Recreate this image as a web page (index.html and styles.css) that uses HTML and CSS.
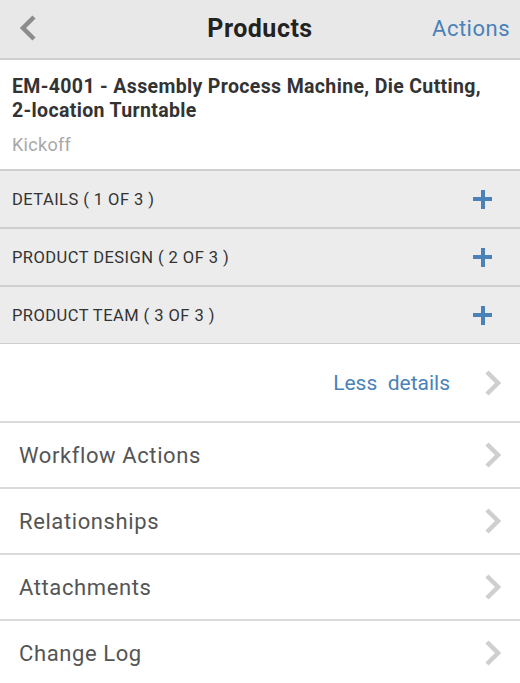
FILE: index.html
```html
<!DOCTYPE html>
<html>
<head>
<meta charset="utf-8">
<link rel="stylesheet" href="styles.css">
</head>
<body>
<div class="app">
  <header class="topbar">
    <span class="back">
      <svg width="20" height="28" viewBox="0 0 20 28"><path d="M16 3 L5 14 L16 25" fill="none" stroke="#8c8c8c" stroke-width="4.5"/></svg>
    </span>
    <h1 class="title">Products</h1>
    <span class="actions">Actions</span>
  </header>
  <section class="record">
    <div class="record-name">EM-4001 - Assembly Process Machine, Die Cutting, <span class="nowrap">2-location</span> Turntable</div>
    <div class="record-stage">Kickoff</div>
  </section>
  <div class="sections">
    <div class="section-row"><span>DETAILS ( 1 OF 3 )</span><span class="plus"></span></div>
    <div class="section-row"><span>PRODUCT DESIGN ( 2 OF 3 )</span><span class="plus"></span></div>
    <div class="section-row"><span>PRODUCT TEAM ( 3 OF 3 )</span><span class="plus"></span></div>
  </div>
  <div class="less-row">
    <span class="less">Less&nbsp; details</span>
    <svg class="chev" width="18" height="28" viewBox="0 0 18 28"><path d="M3 3 L14 14 L3 25" fill="none" stroke="#cfcfcf" stroke-width="4.5"/></svg>
  </div>
  <ul class="nav">
    <li class="nav-item"><span>Workflow Actions</span><svg class="chev" width="18" height="28" viewBox="0 0 18 28"><path d="M3 3 L14 14 L3 25" fill="none" stroke="#cfcfcf" stroke-width="4.5"/></svg></li>
    <li class="nav-item"><span>Relationships</span><svg class="chev" width="18" height="28" viewBox="0 0 18 28"><path d="M3 3 L14 14 L3 25" fill="none" stroke="#cfcfcf" stroke-width="4.5"/></svg></li>
    <li class="nav-item"><span>Attachments</span><svg class="chev" width="18" height="28" viewBox="0 0 18 28"><path d="M3 3 L14 14 L3 25" fill="none" stroke="#cfcfcf" stroke-width="4.5"/></svg></li>
    <li class="nav-item"><span>Change Log</span><svg class="chev" width="18" height="28" viewBox="0 0 18 28"><path d="M3 3 L14 14 L3 25" fill="none" stroke="#cfcfcf" stroke-width="4.5"/></svg></li>
  </ul>
</div>
</body>
</html>
```
FILE: styles.css
```css
* { box-sizing: border-box; }
html, body { margin: 0; padding: 0; background: #fff; }
body { font-family: Roboto, "Liberation Sans", sans-serif; }
.app { width: 520px; overflow: hidden; }

.topbar {
  height: 60px;
  background: #e8e8e8;
  border-bottom: 2px solid #cfcfcf;
  display: grid;
  grid-template-columns: 1fr auto 1fr;
  align-items: center;
  padding: 0 10px 2px 10px;
}
.back { display: flex; align-items: center; margin-left: 8px; }
.title {
  margin: 0;
  font-size: 25px;
  font-weight: 700;
  letter-spacing: 0.5px;
  color: #222;
}
.actions {
  justify-self: end;
  font-size: 22px;
  letter-spacing: 0.5px;
  color: #4a82b8;
}

.record { padding: 15px 12px 13px; }
.record-name {
  font-size: 19.5px;
  font-weight: 700;
  letter-spacing: 0.35px;
  color: #333;
  line-height: 24px;
}
.nowrap { white-space: nowrap; }
.record-stage {
  margin-top: 11px;
  font-size: 18px;
  letter-spacing: 0.3px;
  color: #a8a8a8;
  line-height: 22px;
}

.sections { border-top: 2px solid #cfcfcf; }
.section-row {
  height: 58px;
  background: #ececec;
  border-bottom: 2px solid #cfcfcf;
  display: flex;
  align-items: center;
  justify-content: space-between;
  padding: 0 28px 0 12px;
  font-size: 16.5px;
  letter-spacing: 0.45px;
  color: #333;
}
.section-row:last-child { height: 57px; border-bottom-width: 1px; }
.plus {
  position: relative;
  width: 19px;
  height: 19px;
}
.plus::before, .plus::after {
  content: "";
  position: absolute;
  background: #4a82b8;
}
.plus::before { left: 0; right: 0; top: 7.5px; height: 4px; }
.plus::after { top: 0; bottom: 0; left: 7.5px; width: 4px; }

.less-row {
  height: 79px;
  display: flex;
  align-items: center;
  justify-content: flex-end;
  padding: 0 18px 0 19px;
  border-bottom: 2px solid #dadada;
}
.less {
  font-size: 21px;
  color: #4a82b8;
  margin-right: 34px;
}
.chev { display: block; }

.nav { list-style: none; margin: 0; padding: 0; }
.nav-item {
  height: 66px;
  display: flex;
  align-items: center;
  justify-content: space-between;
  padding: 0 18px 0 19px;
  border-bottom: 2px solid #dadada;
  font-size: 22px;
  letter-spacing: 0.6px;
  color: #555;
}
```
